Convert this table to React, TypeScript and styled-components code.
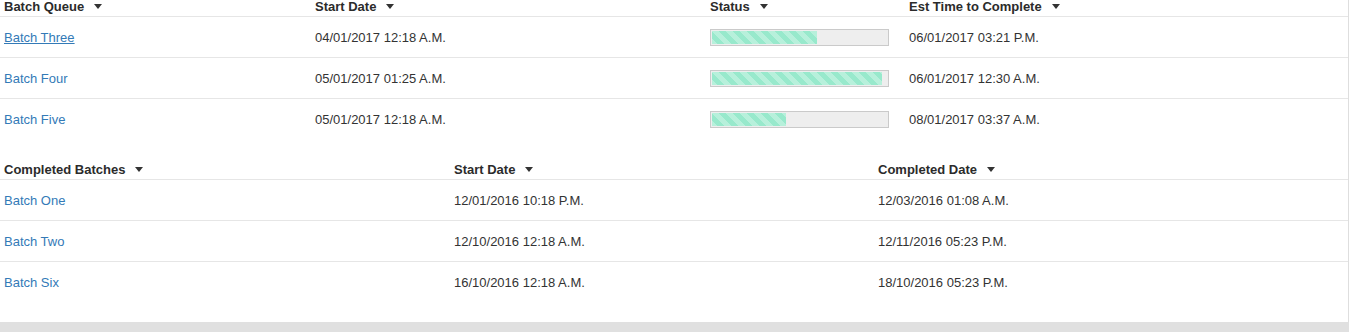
import * as React from "react";
import styled, { createGlobalStyle } from "styled-components";

type Column = { key: string; label: string };

type BatchRow = {
  name: string;
  cells: React.ReactNode[];
  hover?: boolean;
};

const queueColumns: Column[] = [
  { key: "name", label: "Batch Queue" },
  { key: "start", label: "Start Date" },
  { key: "status", label: "Status" },
  { key: "est", label: "Est Time to Complete" },
];

const completedColumns: Column[] = [
  { key: "name", label: "Completed Batches" },
  { key: "start", label: "Start Date" },
  { key: "done", label: "Completed Date" },
];

const GlobalStyle = createGlobalStyle`
  html, body {
    margin: 0;
    padding: 0;
    background: #e0e0e0;
    font-family: "Liberation Sans", Arial, sans-serif;
    font-size: 13px;
    color: #333;
    overflow: hidden;
  }
`;

const Card = styled.div`
  margin-top: -4px;
  width: 1348px;
  background: #fff;
  border-right: 1px solid #dedede;
  box-shadow: 0 3px 6px rgba(0, 0, 0, 0.12);
  padding-bottom: 20px;
`;

const Table = styled.div<{ $cols: string }>`
  display: grid;
  grid-template-columns: ${(p) => p.$cols};
  & + & {
    margin-top: 20px;
  }
`;

const HeaderCell = styled.div`
  height: 20px;
  display: flex;
  align-items: center;
  padding-left: 4px;
  font-weight: bold;
  color: #2b2b2b;
  border-bottom: 1px solid #e6e6e6;
  white-space: nowrap;
`;

const Caret = styled.span`
  display: inline-block;
  margin-left: 10px;
  margin-top: 1px;
  width: 0;
  height: 0;
  border-left: 4px solid transparent;
  border-right: 4px solid transparent;
  border-top: 5px solid #333;
`;

const Cell = styled.div<{ $last: boolean }>`
  height: 40px;
  display: flex;
  align-items: center;
  padding-left: 4px;
  border-bottom: ${(p) => (p.$last ? "none" : "1px solid #e6e6e6")};
  white-space: nowrap;
`;

const BatchLink = styled.a<{ $hover?: boolean }>`
  color: #337ab7;
  text-decoration: ${(p) => (p.$hover ? "underline" : "none")};
  cursor: pointer;
`;

const Progress = styled.div`
  box-sizing: border-box;
  width: 179px;
  height: 17px;
  margin-top: 1px;
  padding: 1px;
  border: 1px solid #cacaca;
  background: #eeeeee;
`;

const ProgressFill = styled.div`
  height: 100%;
  background-color: #98e9cc;
  background-image: linear-gradient(
    45deg,
    rgba(255, 255, 255, 0.3) 25%,
    transparent 25%,
    transparent 50%,
    rgba(255, 255, 255, 0.3) 50%,
    rgba(255, 255, 255, 0.3) 75%,
    transparent 75%,
    transparent
  );
  background-size: 14px 14px;
`;

const StatusBar: React.FC<{ value: number }> = ({ value }) => (
  <Progress>
    <ProgressFill style={{ width: `${value}%` }} />
  </Progress>
);

const queueRows: BatchRow[] = [
  {
    name: "Batch Three",
    hover: true,
    cells: ["04/01/2017 12:18 A.M.", <StatusBar value={60} />, "06/01/2017 03:21 P.M."],
  },
  {
    name: "Batch Four",
    cells: ["05/01/2017 01:25 A.M.", <StatusBar value={97} />, "06/01/2017 12:30 A.M."],
  },
  {
    name: "Batch Five",
    cells: ["05/01/2017 12:18 A.M.", <StatusBar value={42} />, "08/01/2017 03:37 A.M."],
  },
];

const completedRows: BatchRow[] = [
  { name: "Batch One", cells: ["12/01/2016 10:18 P.M.", "12/03/2016 01:08 A.M."] },
  { name: "Batch Two", cells: ["12/10/2016 12:18 A.M.", "12/11/2016 05:23 P.M."] },
  { name: "Batch Six", cells: ["16/10/2016 12:18 A.M.", "18/10/2016 05:23 P.M."] },
];

const BatchTable: React.FC<{ cols: string; columns: Column[]; rows: BatchRow[] }> = ({
  cols,
  columns,
  rows,
}) => (
  <Table $cols={cols}>
    {columns.map((col) => (
      <HeaderCell key={col.key}>
        {col.label}
        <Caret />
      </HeaderCell>
    ))}
    {rows.map((row, r) => {
      const last = r === rows.length - 1;
      return (
        <React.Fragment key={row.name}>
          <Cell $last={last}>
            <BatchLink $hover={row.hover}>{row.name}</BatchLink>
          </Cell>
          {row.cells.map((c, i) => (
            <Cell $last={last} key={i}>
              {c}
            </Cell>
          ))}
        </React.Fragment>
      );
    })}
  </Table>
);

const App: React.FC = () => (
  <>
    <GlobalStyle />
    <Card>
      <BatchTable cols="311px 395px 199px 1fr" columns={queueColumns} rows={queueRows} />
      <BatchTable cols="450px 424px 1fr" columns={completedColumns} rows={completedRows} />
    </Card>
  </>
);

export default App;
